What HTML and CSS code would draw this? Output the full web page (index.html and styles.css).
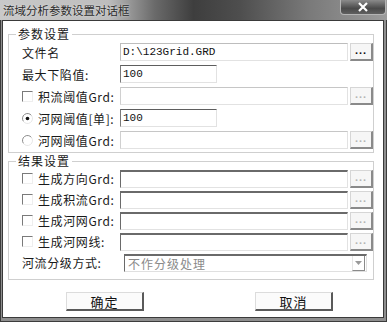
FILE: index.html
```html
<!DOCTYPE html>
<html lang="zh-CN">
<head>
<meta charset="utf-8">
<title>流域分析参数设置对话框</title>
<link rel="stylesheet" href="styles.css">
</head>
<body>
<div class="window">
  <div class="titlebar">
    <span class="title">流域分析参数设置对话框</span>
    <div class="close">
      <svg width="14" height="10" viewBox="0 0 14 10"><path d="M3 1 L11 9 M11 1 L3 9" stroke="#fff" stroke-width="2.2" fill="none"/></svg>
    </div>
  </div>
  <div class="client">
    <fieldset class="group g1">
      <legend>参数设置</legend>
      <div class="row">
        <span class="lbl">文件名</span>
        <div class="field long ro mono">D:\123Grid.GRD</div>
        <button class="dots on">...</button>
      </div>
      <div class="row">
        <span class="lbl">最大下陷值:</span>
        <div class="field short sunk mono">100</div>
      </div>
      <div class="row">
        <span class="lbl"><span class="chk"></span>积流阈值Grd:</span>
        <div class="field long dis"></div>
        <button class="dots">...</button>
      </div>
      <div class="row">
        <span class="lbl"><span class="radio"><svg width="11" height="11" viewBox="0 0 11 11"><path d="M9.5 2.5 A5 5 0 0 0 1.5 8.5" stroke="#8a8a8a" fill="none"/><path d="M9.5 2.5 A5 5 0 0 1 1.5 8.5" stroke="#e6e6e6" fill="none"/><circle cx="5.5" cy="5.5" r="1.8" fill="#111"/></svg></span>河网阈值[单]:</span>
        <div class="field short sunk mono">100</div>
      </div>
      <div class="row">
        <span class="lbl"><span class="radio"><svg width="11" height="11" viewBox="0 0 11 11"><path d="M9.5 2.5 A5 5 0 0 0 1.5 8.5" stroke="#8a8a8a" fill="none"/><path d="M9.5 2.5 A5 5 0 0 1 1.5 8.5" stroke="#e6e6e6" fill="none"/></svg></span>河网阈值Grd:</span>
        <div class="field long dis"></div>
        <button class="dots">...</button>
      </div>
    </fieldset>

    <fieldset class="group g2">
      <legend>结果设置</legend>
      <div class="row">
        <span class="lbl"><span class="chk"></span>生成方向Grd:</span>
        <div class="field long sunk2"></div>
        <button class="dots">...</button>
      </div>
      <div class="row">
        <span class="lbl"><span class="chk"></span>生成积流Grd:</span>
        <div class="field long sunk2"></div>
        <button class="dots">...</button>
      </div>
      <div class="row">
        <span class="lbl"><span class="chk"></span>生成河网Grd:</span>
        <div class="field long sunk2"></div>
        <button class="dots">...</button>
      </div>
      <div class="row">
        <span class="lbl"><span class="chk"></span>生成河网线:</span>
        <div class="field long sunk2"></div>
        <button class="dots">...</button>
      </div>
      <div class="row">
        <span class="lbl wide">河流分级方式:</span>
        <div class="combo">
          <span class="combo-text">不作分级处理</span>
          <span class="combo-btn"><svg width="7" height="4" viewBox="0 0 7 4"><path d="M0 0 H7 L3.5 4 Z" fill="#9a9a9a"/></svg></span>
        </div>
      </div>
    </fieldset>

    <div class="actions">
      <button class="btn">确定</button>
      <button class="btn">取消</button>
    </div>
  </div>
</div>
</body>
</html>
```

FILE: styles.css
```css
* { box-sizing: border-box; }
html, body { margin: 0; padding: 0; background: #fff; }
body {
  font-family: "Noto Sans CJK SC", "Noto Sans", sans-serif;
  font-size: 12px;
  color: #1a1a1a;
}
.window {
  width: 387px;
  height: 322px;
  display: flex;
  flex-direction: column;
  background: #8e8e8e;
  border: 1px solid #3c3c3c;
  border-top: 0;
}
.titlebar {
  height: 20px;
  flex: none;
  display: flex;
  align-items: flex-start;
  justify-content: space-between;
  margin: 0 -1px;
  background: linear-gradient(to right, #c9c9c9 0%, #bdbdbd 28%, #6a6a6a 40%, #3e3e3e 50%, #4e4e4e 62%, #7a7a7a 80%, #9c9c9c 100%);
}
.title {
  font-size: 11.5px;
  line-height: 14px;
  padding: 3px 0 0 3px;
  color: #2a2a2a;
  letter-spacing: 0;
  text-shadow: 0 0 2px #e8e8e8;
}
.close {
  width: 46px;
  height: 15px;
  margin-right: 1px;
  display: flex;
  align-items: center;
  justify-content: center;
  border: 1px solid #b4b4b4;
  border-top: 0;
  border-radius: 0 0 4px 4px;
  background: linear-gradient(to bottom, #8a8a8a, #4a4a4a 60%, #606060);
}
.client {
  flex: 1;
  margin: 0 2px 3px 1px;
  border: 1px solid #3a3a3a;
  background: #fff;
  padding: 6px 9px 0 5px;
  display: flex;
  flex-direction: column;
}
.group {
  margin: 0;
  padding: 0 0 1px 7px;
  border: 1px solid #cfcfcf;
  min-width: 0;
}
.group legend {
  padding: 0 2px;
  margin-left: 0;
  line-height: 14px;
  font-size: 12px;
  color: #1a1a1a;
  letter-spacing: 1px;
}
.g2 { margin-top: 1px; padding-bottom: 6px; }
.g2 .row { height: 21px; }
.row {
  height: 22px;
  display: flex;
  align-items: center;
  padding-left: 6px;
}
.lbl {
  width: 98px;
  flex: none;
  display: flex;
  align-items: center;
  white-space: nowrap;
  letter-spacing: 0.6px;
  color: #1a1a1a;
}
.lbl.wide { width: 100px; }
.chk {
  width: 11px;
  height: 11px;
  margin-right: 5px;
  border-top: 1px solid #7a7a7a;
  border-left: 1px solid #7a7a7a;
  border-right: 1px solid #eeeeee;
  border-bottom: 1px solid #eeeeee;
  flex: none;
}
.radio {
  width: 11px;
  height: 11px;
  margin-right: 5px;
  display: flex;
  flex: none;
}
.field {
  height: 18px;
  background: #fff;
  border: 1px solid #e2e2e2;
  display: flex;
  align-items: center;
  padding-left: 2px;
  overflow: hidden;
}
.mono {
  font-family: "Liberation Mono", "DejaVu Sans Mono", monospace;
  font-size: 11px;
  color: #111;
}
.long { width: 228px; }
.short { width: 97px; }
.ro {
  border-top-color: #bdbdbd;
  border-left-color: #bdbdbd;
}
.dis {
  border-top-color: #c6c6c6;
  border-left-color: #d0d0d0;
}
.sunk {
  border-top: 1px solid #5e5e5e;
  border-left: 1px solid #7a7a7a;
}
.sunk2 {
  border-top: 2px solid #6a6a6a;
  border-left: 1px solid #6a6a6a;
}
.dots {
  width: 23px;
  height: 18px;
  margin-left: 2px;
  padding: 0 0 4px;
  font-family: "Liberation Sans", sans-serif;
  font-size: 11px;
  font-weight: bold;
  letter-spacing: 1px;
  line-height: 10px;
  color: #b4b4b4;
  background: #f6f6f6;
  border-top: 1px solid #d6d6d6;
  border-left: 1px solid #d6d6d6;
  border-right: 2px solid #8a8a8a;
  border-bottom: 2px solid #8a8a8a;
  display: flex;
  align-items: flex-end;
  justify-content: center;
}
.dots.on { color: #111; }
.combo {
  width: 243px;
  height: 18px;
  margin-left: 2px;
  display: flex;
  align-items: center;
  justify-content: space-between;
  border-top: 2px solid #6a6a6a;
  border-left: 1px solid #6a6a6a;
  border-right: 1px solid #e0e0e0;
  border-bottom: 1px solid #e0e0e0;
  background: #fff;
}
.combo-text {
  padding-left: 3px;
  color: #8a8a8a;
  letter-spacing: 1px;
}
.combo-btn {
  width: 13px;
  height: 15px;
  display: flex;
  align-items: center;
  justify-content: center;
  border-left: 1px solid #e6e6e6;
  border-right: 1px solid #8a8a8a;
  border-bottom: 1px solid #8a8a8a;
  margin-right: 1px;
}
.actions {
  display: flex;
  gap: 111px;
  padding-left: 58px;
  margin-top: 12px;
}
.btn {
  width: 78px;
  height: 19px;
  padding: 0;
  font-family: "Noto Sans CJK SC", sans-serif;
  font-size: 13px;
  line-height: 15px;
  color: #111;
  letter-spacing: 1px;
  background: #fbfbfb;
  border-top: 1px solid #dcdcdc;
  border-left: 1px solid #dcdcdc;
  border-right: 2px solid #5a5a5a;
  border-bottom: 2px solid #5a5a5a;
}
```
